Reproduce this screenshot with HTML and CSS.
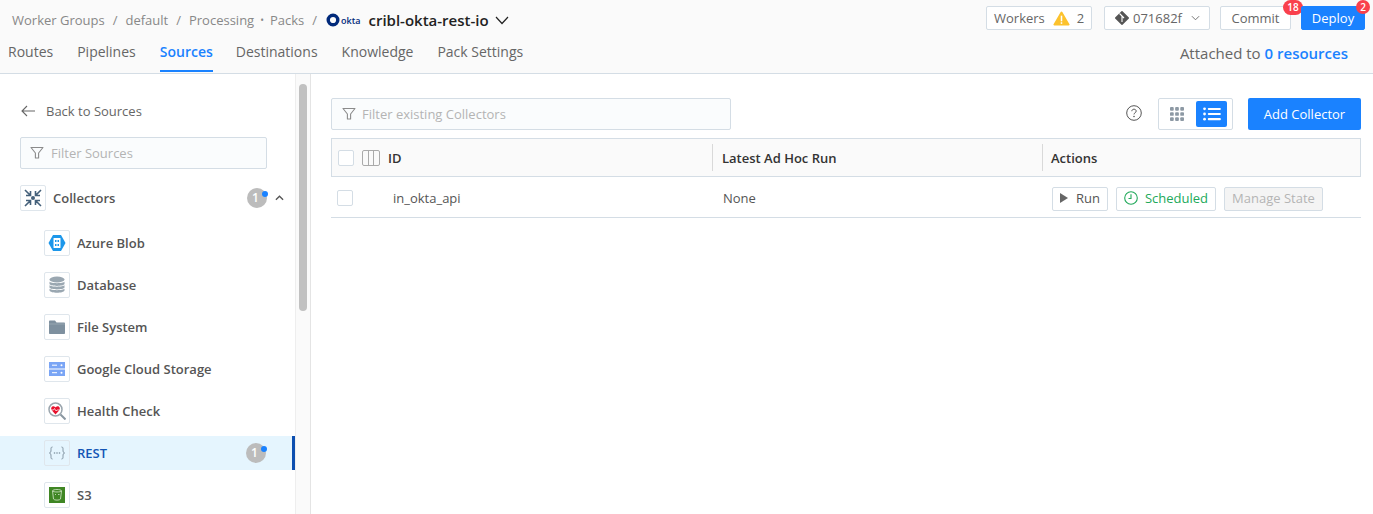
FILE: index.html
```html
<!DOCTYPE html>
<html lang="en">
<head>
<meta charset="utf-8">
<title>Sources</title>
<link rel="stylesheet" href="styles.css">
</head>
<body>
<header class="header">
  <div class="top">
    <nav class="crumbs">
      <span>Worker Groups</span><span class="sep">/</span><span>default</span><span class="sep">/</span><span>Processing</span><span class="dot">•</span><span>Packs</span><span class="sep">/</span>
      <span class="okta"><svg class="okta-ring" viewBox="0 0 14 14"><circle cx="7" cy="7" r="4.8" fill="none" stroke="#00297a" stroke-width="3.4"/></svg><span class="okta-word">okta</span></span>
      <span class="pack">cribl-okta-rest-io</span>
      <svg class="pack-caret" viewBox="0 0 14 9"><path d="M1 1l6 6.5L13 1" fill="none" stroke="#222" stroke-width="1.2"/></svg>
    </nav>
    <div class="top-actions">
      <div class="tbtn workers">Workers
        <svg class="warn" viewBox="0 0 18 16"><path d="M9 .5a1 1 0 0 1 .9.5l7.6 13a1 1 0 0 1-.9 1.5H1.4a1 1 0 0 1-.9-1.5L8.1 1A1 1 0 0 1 9 .5z" fill="#fcc22d"/><rect x="8.2" y="5" width="1.6" height="6" fill="#fff"/><rect x="8.2" y="12" width="1.6" height="1.7" fill="#fff"/></svg>
        <span>2</span></div>
      <div class="tbtn version">
        <svg class="git" viewBox="0 0 14 14"><path d="M6.200 .4a1.100 1.100 0 0 1 1.600 0l5.800 5.800a1.100 1.100 0 0 1 0 1.600l-5.800 5.800a1.100 1.100 0 0 1-1.600 0L.4 7.800a1.100 1.100 0 0 1 0-1.600z" fill="#555"/><path d="M4.500 2.500L9 7M7 5v6" stroke="#fff" stroke-width="1.100" fill="none"/></svg>
        071682f
        <svg class="vcaret" viewBox="0 0 10 6"><path d="M1 1l4 4 4-4" fill="none" stroke="#666" stroke-width="1"/></svg></div>
      <div class="tbtn commit">Commit<span class="badge">18</span></div>
      <div class="tbtn deploy">Deploy<span class="badge">2</span></div>
    </div>
  </div>
  <div class="bottom">
    <nav class="tabs">
      <a>Routes</a><a>Pipelines</a><a class="active">Sources</a><a>Destinations</a><a>Knowledge</a><a>Pack Settings</a>
    </nav>
    <div class="attached">Attached to <b>0 resources</b></div>
  </div>
</header>
<div class="body">
  <aside class="side">
    <div class="back">
      <svg class="arrow" viewBox="0 0 14 12"><path d="M14 6H1M6 1L1 6l5 5" fill="none" stroke="#666" stroke-width="1.100"/></svg>
      <span>Back to Sources</span>
    </div>
    <div class="input side-input">
      <svg class="funnel" viewBox="0 0 14 14"><path d="M1 1.500h12L8.600 7v5H5.400V7z" fill="none" stroke="#8b8b8b" stroke-width="1.100" stroke-linejoin="round"/></svg>
      <span>Filter Sources</span>
    </div>
    <div class="group">
      <span class="ico"><svg viewBox="0 0 18 18"><g stroke="#44607a" stroke-width="1.600" fill="none"><path d="M1 1l5 5M6.500 2v4.500H2M17 1l-5 5M11.500 2v4.500H16M1 17l5-5M6.500 16v-4.500H2M17 17l-5-5M11.500 16v-4.500H16"/></g><circle cx="9" cy="9" r="2" fill="#44607a"/></svg></span>
      <span class="group-name">Collectors</span>
      <span class="count"><i>1</i></span>
      <svg class="chev" viewBox="0 0 10 6"><path d="M1 5l4-4 4 4" fill="none" stroke="#555" stroke-width="1.500"/></svg>
    </div>
    <ul class="list">
      <li><span class="ico"><svg viewBox="0 0 18 18"><path d="M5 1h8L17.500 9 13 17H5L.5 9z" fill="#1c97ea"/><rect x="5.500" y="4" width="7" height="10" rx=".5" fill="#fff"/><path d="M7 6h1.500v2H7zM9.500 6H11v2H9.500zM7 10h1.500v2H7zM9.500 10H11v2H9.500z" fill="#1c97ea"/></svg></span>Azure Blob</li>
      <li><span class="ico"><svg viewBox="0 0 18 18"><g fill="#9aa7b1"><ellipse cx="9" cy="3.500" rx="7.500" ry="3"/><path d="M1.500 5.500c1 2.200 14 2.200 15 0V8c-1 2.500-14 2.500-15 0zM1.500 9c1 2.200 14 2.200 15 0v2.500c-1 2.500-14 2.500-15 0zM1.500 12.500c1 2.200 14 2.200 15 0v2c-1 3-14 3-15 0z"/></g></svg></span>Database</li>
      <li><span class="ico"><svg viewBox="0 0 18 18"><path d="M1 3.500c0-.5.400-1 1-1h5l1.500 2H16c.6 0 1 .4 1 1V15c0 .6-.4 1-1 1H2c-.6 0-1-.4-1-1z" fill="#7e909f"/><path d="M1 6h16" stroke="#aab6c0" stroke-width=".6"/></svg></span>File System</li>
      <li><span class="ico"><svg viewBox="0 0 18 18"><path d="M1 2h16v6.500H1zM1 9.500h16V16H1z" fill="#7aa5f5"/><path d="M4 5.200h5M4 12.700h5" stroke="#fff" stroke-width="1"/><circle cx="13.500" cy="5.200" r="1" fill="#fff"/><circle cx="13.500" cy="12.700" r="1" fill="#fff"/></svg></span>Google Cloud Storage</li>
      <li><span class="ico"><svg viewBox="0 0 18 18"><circle cx="7.500" cy="7.500" r="6.500" fill="#fff" stroke="#9aa5ad" stroke-width="1.500"/><path d="M12.500 12.500l5 5" stroke="#8a97a1" stroke-width="2"/><path d="M7.500 12.500L3.500 8C2.500 6.300 3.800 4 5.500 4.300c1 .1 1.600.7 2 1.300.4-.6 1-1.200 2-1.300C11.200 4 12.500 6.300 11.500 8z" fill="#e8112d"/><path d="M3 8h2.500l1-1.500L8 9l1-1h3" stroke="#fff" stroke-width=".7" fill="none"/></svg></span>Health Check</li>
      <li class="selected"><span class="ico"><svg viewBox="0 0 18 18"><g fill="none" stroke="#7d8f9d" stroke-width="1"><path d="M4.500 3C3 3 3 4 3 5.500c0 2-.2 3-1.500 3.500C2.800 9.500 3 10.500 3 12.500 3 14 3 15 4.500 15M13.500 3C15 3 15 4 15 5.500c0 2 .2 3 1.500 3.500-1.300.5-1.500 1.500-1.500 3.500 0 1.500 0 2.500-1.500 2.500"/></g><g fill="#7d8f9d"><circle cx="6.500" cy="9" r=".8"/><circle cx="9" cy="9" r=".8"/><circle cx="11.500" cy="9" r=".8"/></g></svg></span>REST<span class="count"><i>1</i></span></li>
      <li><span class="ico"><svg viewBox="0 0 18 18"><rect x="1" y="1" width="16" height="16" fill="#3f8624"/><path d="M4.500 5c0-2 9-2 9 0l-1 8c-.5 1.500-6.500 1.500-7 0zM4.500 5c1 1.300 8 1.300 9 0" fill="none" stroke="#d6e8cd" stroke-width=".8"/><path d="M7 8.500h1M10 8.500h1.500" stroke="#d6e8cd" stroke-width=".8"/></svg></span>S3</li>
    </ul>
  </aside>
  <div class="track"><div class="thumb"></div></div>
  <main class="main">
    <div class="toolbar">
      <div class="input main-input">
        <svg class="funnel" viewBox="0 0 14 14"><path d="M1 1.500h12L8.600 7v5H5.400V7z" fill="none" stroke="#8b8b8b" stroke-width="1.100" stroke-linejoin="round"/></svg>
        <span>Filter existing Collectors</span>
      </div>
      <svg class="help" viewBox="0 0 16 16"><circle cx="8" cy="8" r="7.300" fill="none" stroke="#555" stroke-width="1"/><path d="M5.800 6.200C5.800 5 6.800 4.200 8 4.200s2.200.8 2.200 1.900c0 1.700-2.200 1.600-2.200 3.300" fill="none" stroke="#555" stroke-width="1"/><circle cx="8" cy="11.500" r=".8" fill="#555"/></svg>
      <div class="toggle">
        <span class="tg off"><svg viewBox="0 0 15 15"><g fill="#8d99a4"><rect x="0" y="0" width="4" height="4" rx="1"/><rect x="5.500" y="0" width="4" height="4" rx="1"/><rect x="11" y="0" width="4" height="4" rx="1"/><rect x="0" y="5.500" width="4" height="4" rx="1"/><rect x="5.500" y="5.500" width="4" height="4" rx="1"/><rect x="11" y="5.500" width="4" height="4" rx="1"/><rect x="0" y="11" width="4" height="4" rx="1"/><rect x="5.500" y="11" width="4" height="4" rx="1"/><rect x="11" y="11" width="4" height="4" rx="1"/></g></svg></span>
        <span class="tg on"><svg viewBox="0 0 19 15"><g fill="#fff"><circle cx="1.500" cy="2" r="1.500"/><circle cx="1.500" cy="7.500" r="1.500"/><circle cx="1.500" cy="13" r="1.500"/><rect x="5" y="1" width="14" height="2.200" rx="1"/><rect x="5" y="6.400" width="14" height="2.200" rx="1"/><rect x="5" y="11.900" width="14" height="2.200" rx="1"/></g></svg></span>
      </div>
      <div class="add">Add Collector</div>
    </div>
    <div class="table">
      <div class="thead">
        <div class="cell c1"><span class="check"></span>
          <svg class="cols" viewBox="0 0 18 16"><rect x=".5" y=".5" width="17" height="15" rx="1.500" fill="none" stroke="#aaa"/><path d="M6.500 .5v15M11.500 .5v15" stroke="#aaa"/></svg>
          <b>ID</b></div>
        <div class="cell c2"><b>Latest Ad Hoc Run</b></div>
        <div class="cell c3"><b>Actions</b></div>
      </div>
      <div class="trow">
        <div class="cell c1"><span class="check"></span><span class="id">in_okta_api</span></div>
        <div class="cell c2">None</div>
        <div class="cell c3">
          <span class="mini run"><svg viewBox="0 0 8 10"><path d="M0 0l8 5-8 5z" fill="#666"/></svg>Run</span>
          <span class="mini sched"><svg viewBox="0 0 14 14"><circle cx="7" cy="7" r="6.300" fill="none" stroke="#21a95a" stroke-width="1.100"/><path d="M7 3.300V7.500H4.500" fill="none" stroke="#21a95a" stroke-width="1.100"/></svg>Scheduled</span>
          <span class="mini manage">Manage State</span>
        </div>
      </div>
    </div>
  </main>
</div>
</body>
</html>
```

FILE: styles.css
```css
* { box-sizing: border-box; }
html, body { margin: 0; height: 100%; }
body {
  height: 514px;
  overflow: hidden;
  background: #fff;
  font-family: "Open Sans", sans-serif;
  font-size: 13px;
  color: #555;
  display: flex;
  flex-direction: column;
}
svg { display: block; flex: none; }

.header {
  height: 74px;
  flex: none;
  background: #fafafa;
  border-bottom: 1px solid #d4dde5;
  display: flex;
  flex-direction: column;
}
.top {
  height: 37px;
  display: flex;
  justify-content: space-between;
  padding: 6px 8px 0 12px;
}
.crumbs { display: flex; align-items: center; height: 28px; color: #888; font-size: 13px; }
.sep { margin: 0 8px; }
.dot { margin: 0 6px; font-size: 10px; }
.okta { display: flex; align-items: center; margin-left: 1px; }
.okta-ring { width: 14px; height: 14px; }
.okta-word { color: #00297a; font-size: 9px; font-weight: 600; margin-left: 1px; line-height: 1; }
.pack { color: #222; font-size: 15px; font-weight: 600; margin-left: 8px; }
.pack-caret { width: 14px; height: 9px; margin-left: 6px; }

.top-actions { display: flex; align-items: flex-start; height: 24px; }
.tbtn {
  height: 24px;
  display: flex;
  align-items: center;
  position: relative;
  background: #fff;
  border: 1px solid #d4dde5;
  border-radius: 2px;
  font-size: 13px;
  color: #666;
}
.workers { width: 106px; padding-left: 7px; margin-right: 12px; }
.warn { width: 17px; height: 15px; margin: 0 7px 0 8px; }
.version { width: 106px; padding-left: 10px; margin-right: 10px; }
.git { width: 14px; height: 14px; margin-right: 4px; }
.vcaret { width: 9px; height: 6px; margin-left: 9px; }
.commit { width: 71px; justify-content: center; margin-right: 10px; }
.deploy { width: 64px; justify-content: center; background: #1a82ff; border-color: #1a82ff; color: #fff; }
.badge {
  position: absolute;
  top: -7px;
  right: -6px;
  min-width: 14px;
  height: 14px;
  padding: 0 3px;
  border-radius: 7px;
  background: #f9404c;
  color: #fff;
  font-size: 10px;
  font-weight: 600;
  line-height: 14px;
  text-align: center;
}
.commit .badge { width: 20px; height: 15px; right: -13px; line-height: 15px; border-radius: 8px; }

.bottom { flex: 1; display: flex; justify-content: space-between; align-items: flex-start; padding: 0 25px 0 8px; }
.tabs { display: flex; gap: 24px; font-size: 14px; color: #666; }
.tabs a { display: block; height: 35px; padding-top: 5px; line-height: 20px; }
.tabs .active { color: #1a82ff; font-weight: 600; border-bottom: 2px solid #1a82ff; margin-right: -1px; }
.attached { font-size: 15px; color: #666; line-height: 20px; margin-top: 6px; }
.attached b { color: #1a82ff; font-weight: 600; }

.body { flex: 1; display: flex; min-height: 0; }
.side { width: 296px; flex: none; padding-top: 27px; overflow: hidden; border-right: 1px solid #eee; }
.back { display: flex; align-items: center; height: 20px; padding-left: 21px; color: #666; }
.arrow { width: 14px; height: 12px; margin-right: 11px; }
.input {
  display: flex;
  align-items: center;
  height: 32px;
  background: #fafcfd;
  border: 1px solid #d4dde5;
  border-radius: 2px;
  color: #b4b4b4;
  font-size: 13px;
}
.side-input { width: 247px; margin: 16px 0 0 20px; padding-left: 9px; }
.funnel { width: 14px; height: 14px; margin-right: 7px; }
.main-input { width: 400px; padding-left: 10px; }
.main-input .funnel { margin-right: 6px; }
.group { display: flex; align-items: center; height: 26px; margin: 16px 0 0 20px; font-weight: 600; font-size: 13px; position: relative; }
.ico {
  width: 26px;
  height: 26px;
  flex: none;
  display: flex;
  align-items: center;
  justify-content: center;
  background: #fff;
  border: 1px solid #dfe6ec;
  border-radius: 2px;
}
.ico svg { width: 18px; height: 18px; }
.group-name { margin-left: 7px; }
.count {
  position: absolute;
  left: 227px;
  top: 3px;
  width: 20px;
  height: 20px;
  padding-right: 3px;
  border-radius: 50%;
  background: #bcbcbc;
  color: #fff;
  font-size: 12px;
  font-weight: 600;
  line-height: 20px;
  text-align: center;
}
.count i { font-style: normal; }
.count::after {
  content: "";
  position: absolute;
  top: 3px;
  right: -1px;
  width: 6px;
  height: 6px;
  border-radius: 50%;
  background: #1a82ff;
}
.chev { position: absolute; left: 255px; top: 10px; width: 9px; height: 6px; }
.list { list-style: none; margin: 11px 0 0; padding: 0; }
.list li {
  height: 42px;
  display: flex;
  align-items: center;
  gap: 7px;
  padding-left: 44px;
  font-weight: 600;
  font-size: 13px;
  position: relative;
}
.list .selected {
  height: 34px;
  margin: 4px 0;
  background: #e5f5fe;
  color: #1355b5;
  border-right: 3px solid #0d4fb0;
}
.list .selected .ico { background: #e5f5fe; }
.list .selected .count { left: 246px; top: 7px; }

.track { width: 15px; flex: none; background: #fafafa; border-right: 1px solid #e4e4e4; padding: 10px 0 0 3px; }
.thumb { width: 8px; height: 227px; background: #c1c1c1; border-radius: 4px; }

.main { flex: 1; min-width: 0; padding: 24px 12px 0 20px; }
.toolbar { display: flex; align-items: center; height: 32px; }
.help { width: 16px; height: 16px; margin: 0 16px 2px auto; }
.toggle { width: 75px; height: 32px; display: flex; align-items: center; gap: 1px; padding-right: 5px; background: #fff; border: 1px solid #d4dde5; border-radius: 2px; }
.tg { display: flex; align-items: center; justify-content: center; height: 26px; border-radius: 2px; }
.tg svg { width: 14px; height: 14px; }
.tg.off { width: 36px; }
.tg.on { width: 31px; background: #1a82ff; }
.tg.on svg { width: 18px; }
.add { width: 113px; height: 32px; margin-left: 15px; background: #1a82ff; color: #fff; border-radius: 2px; display: flex; align-items: center; justify-content: center; }

.table { margin-top: 8px; }
.thead, .trow { display: grid; align-items: center; }
.thead { grid-template-columns: 380px 330px 1fr; height: 39px; background: #fafafa; border: 1px solid #d4dde5; color: #333; }
.trow { grid-template-columns: 381px 329px 1fr; height: 41px; padding-top: 2px; border-bottom: 1px solid #d4dde5; }
.thead b { font-weight: 600; }
.cell { display: flex; align-items: center; height: 27px; }
.thead .c1 { padding-left: 6px; }
.thead .c2 { border-left: 1px solid #d9d9d9; padding-left: 9px; }
.thead .c3 { border-left: 1px solid #d9d9d9; padding-left: 8px; }
.check { width: 16px; height: 16px; background: #fff; border: 1px solid #d4dde5; border-radius: 2px; }
.cols { width: 18px; height: 16px; margin: 0 8px; }
.trow .c1 { padding-left: 6px; }
.id { margin-left: 40px; }
.trow .c2 { padding-left: 11px; }
.trow .c3 { padding-left: 11px; gap: 8px; margin-top: 2px; }
.mini { height: 24px; display: flex; align-items: center; justify-content: center; padding-bottom: 2px; border: 1px solid #d4dde5; border-radius: 2px; background: #fff; }
.run { width: 56px; gap: 8px; }
.run svg { width: 8px; height: 10px; }
.sched { width: 100px; gap: 7px; color: #21a95a; }
.sched svg { width: 14px; height: 14px; }
.manage { width: 99px; background: #f4f4f4; color: #b4b4b4; }
```
